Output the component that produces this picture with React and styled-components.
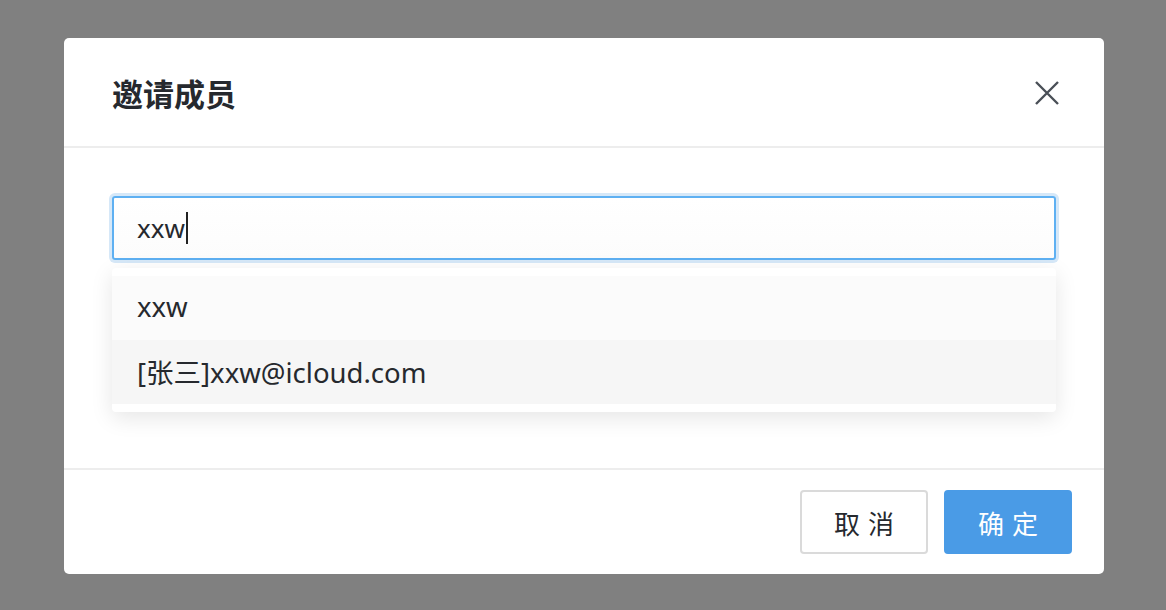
import styled, { createGlobalStyle } from "styled-components";

const GlobalStyle = createGlobalStyle`
    html, body {
        margin: 0;
        padding: 0;
        background: #808080;
        font-family: "Noto Sans", "Noto Sans CJK SC", sans-serif;
    }
`

const Overlay = styled.div`
    width: 1166px;
    height: 610px;
    display: flex;
    align-items: flex-start;
    justify-content: flex-start;
    padding: 38px 0 0 64px;
    box-sizing: border-box;
    background: #808080;
`

const Modal = styled.div`
    width: 1040px;
    height: 536px;
    background: #fff;
    border-radius: 5px;
    display: flex;
    flex-direction: column;
    overflow: hidden;
`

const Header = styled.div`
    height: 108px;
    display: flex;
    align-items: center;
    justify-content: space-between;
    padding: 0 44px 0 48px;
    border-bottom: 2px solid #ededed;
    & h3 {
        margin: 0;
        font-size: 31px;
        font-weight: 700;
        color: #26292e;
        font-family: "Noto Sans CJK SC", sans-serif;
    }
`

const CloseButton = styled.button`
    width: 26px;
    height: 26px;
    padding: 0;
    border: none;
    background: none;
    display: flex;
    align-items: center;
    justify-content: center;
    margin-top: 2px;
`

const Body = styled.div`
    flex: 1;
    padding: 48px 48px 0;
    position: relative;
`

const InputBox = styled.div`
    height: 64px;
    box-sizing: border-box;
    border: 2px solid #5eb0f2;
    border-radius: 3px;
    box-shadow: 0 0 0 3px #d6e8f8;
    display: flex;
    align-items: center;
    padding: 0 23px;
    font-size: 26px;
    color: #26292e;
    background: linear-gradient(#ffffff, #fcfcfc);
    & i {
        display: inline-block;
        width: 2px;
        height: 32px;
        background: #222;
        margin-left: 1px;
    }
`

const Dropdown = styled.div`
    position: absolute;
    left: 48px;
    right: 48px;
    top: 120px;
    background: #fff;
    border-radius: 4px;
    padding: 8px 0;
    box-shadow: 0 6px 22px rgba(0, 0, 0, 0.1);
`

const Option = styled.div`
    height: 64px;
    display: flex;
    align-items: center;
    padding: 0 25px 3px;
    box-sizing: border-box;
    font-size: 27.5px;
    color: #26292e;
    background: ${props => props.active ? "#f6f6f6" : "#fbfbfb"};
`

const Footer = styled.div`
    height: 106px;
    box-sizing: border-box;
    border-top: 2px solid #ededed;
    display: flex;
    justify-content: flex-end;
    align-items: flex-start;
    gap: 16px;
    padding: 20px 32px 0;
`

const Button = styled.button`
    width: 128px;
    height: 64px;
    box-sizing: border-box;
    border-radius: 4px;
    font-size: 26px;
    letter-spacing: 8px;
    text-indent: 8px;
    font-family: "Noto Sans CJK SC", sans-serif;
    border: 2px solid ${props => props.primary ? "#4a9be6" : "#dadada"};
    background: ${props => props.primary ? "#4a9be6" : "#fff"};
    color: ${props => props.primary ? "#fff" : "#26292e"};
`

function App() {
    return (
        <Overlay>
            <GlobalStyle />
            <Modal>
                <Header>
                    <h3>邀请成员</h3>
                    <CloseButton>
                        <svg width="24" height="24" viewBox="0 0 24 24">
                            <path d="M1 1 L23 23 M23 1 L1 23" stroke="#4a4f57" strokeWidth="2.4" fill="none" />
                        </svg>
                    </CloseButton>
                </Header>
                <Body>
                    <InputBox>xxw<i /></InputBox>
                    <Dropdown>
                        <Option>xxw</Option>
                        <Option active>[张三]xxw@icloud.com</Option>
                    </Dropdown>
                </Body>
                <Footer>
                    <Button>取消</Button>
                    <Button primary>确定</Button>
                </Footer>
            </Modal>
        </Overlay>
    );
}

export default App;
